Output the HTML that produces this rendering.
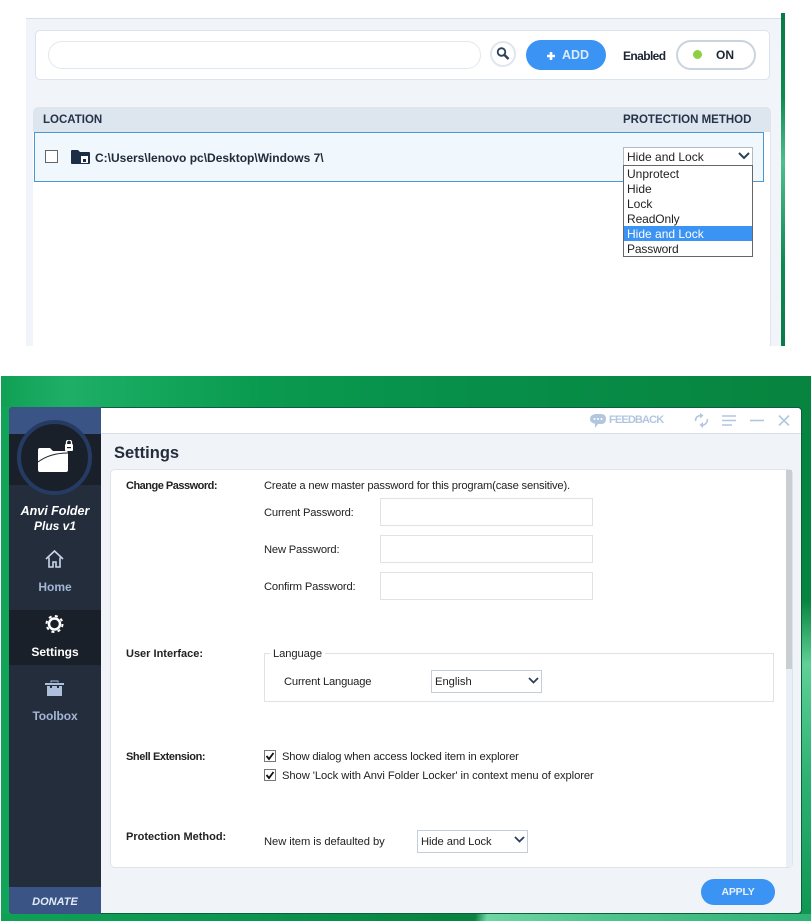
<!DOCTYPE html>
<html><head><meta charset="utf-8"><style>
html,body{margin:0;padding:0;width:811px;height:923px;overflow:hidden;background:#fff}
body{position:relative;font-family:"Liberation Sans",sans-serif;color:#222;font-size:11.5px}
.a,.t{position:absolute}
.t{white-space:nowrap;line-height:14px}
.b{font-weight:bold}
.i{box-sizing:border-box;position:absolute;left:380px;width:213px;height:28px;border:1px solid #dfe3e6;background:#fff}
.nav{color:#a3b6d6;font-weight:bold;font-size:12px;left:9px;width:92px;text-align:center}
</style></head><body>

<!-- TOP PANEL -->
<div class="a" style="left:26px;top:18px;width:755px;height:327px;background:#f1f5fa;border-top:1px solid #d5dfe8"></div>
<div class="a" style="left:781px;top:13px;width:4px;height:333px;background:linear-gradient(#0a7a46,#0e8a50 25%,#4fbd8e 45%,#0e8a50 75%,#0a7a46)"></div>
<div class="a" style="left:35px;top:30px;width:733px;height:48px;background:#fff;border:1px solid #dbe3ec;border-radius:5px"></div>
<div class="a" style="left:48px;top:41px;width:431px;height:26px;background:#fff;border:1px solid #e2e8ee;border-radius:14px"></div>
<div class="a" style="box-sizing:border-box;left:490px;top:41px;width:26px;height:26px;background:#fff;border:2px solid #e0e6ee;border-radius:50%"></div>
<svg class="a" style="left:496px;top:47px" width="15" height="15" viewBox="0 0 15 15"><circle cx="5.500" cy="5" r="3.800" fill="none" stroke="#2d4059" stroke-width="1.800"/><path d="M8.500 8l4 4" stroke="#2d4059" stroke-width="2.400"/></svg>
<div class="a" style="left:526px;top:40px;width:80px;height:30px;background:#3b93f3;border-radius:15px"></div>
<svg class="a" style="left:546px;top:51px" width="10" height="10"><path d="M5 1v8M1 5h8" stroke="#fff" stroke-width="2.600"/></svg>
<div class="t b" style="left:562px;top:48px;color:#dcebfd;font-size:12.500px">ADD</div>
<div class="t b" style="left:623px;top:49px;font-size:12px;letter-spacing:-.6px;color:#1c2533">Enabled</div>
<div class="a" style="box-sizing:border-box;left:676px;top:40px;width:80px;height:30px;background:#fff;border:2px solid #cbd4de;border-radius:15px"></div>
<div class="a" style="left:693px;top:50px;width:9px;height:9px;background:#8fd042;border-radius:50%"></div>
<div class="t b" style="left:716px;top:48px;font-size:12px;color:#1c2533">ON</div>

<div class="a" style="left:33px;top:107px;width:738px;height:25px;background:#dde6ef;border-radius:5px 5px 0 0"></div>
<div class="a" style="left:33px;top:132px;width:738px;height:214px;background:#fff"></div>
<div class="a" style="left:770px;top:132px;width:1px;height:214px;background:#dde6ef"></div>
<div class="t b" style="left:43px;top:113px;font-size:11.500px;color:#25324a">LOCATION</div>
<div class="t b" style="left:623px;top:113px;font-size:11.500px;color:#25324a">PROTECTION METHOD</div>
<div class="a" style="box-sizing:border-box;left:34px;top:132px;width:730px;height:50px;background:#f0f7fd;border:1px solid #4c97d2"></div>
<div class="a" style="box-sizing:border-box;left:45px;top:150px;width:13px;height:13px;background:#fff;border:1px solid #666"></div>
<svg class="a" style="left:71px;top:150px" width="19" height="14" viewBox="0 0 19 14"><path d="M0 1q0-1 1-1h6l2 2h9q1 0 1 1v10q0 1-1 1H1q-1 0-1-1z" fill="#1d2d45"/><rect x="10" y="6" width="7" height="7" fill="#fff"/><rect x="12" y="9" width="3" height="3" fill="#1d2d45"/></svg>
<div class="t b" style="left:95px;top:151px;font-size:12px;color:#222b3a">C:\Users\lenovo pc\Desktop\Windows 7\</div>

<div class="a" style="box-sizing:border-box;left:623px;top:147px;width:130px;height:19px;background:#fff;border:1px solid #b5b9bd"></div>
<div class="t" style="left:627px;top:150px;font-size:12px">Hide and Lock</div>
<svg class="a" style="left:738px;top:152px" width="12" height="8"><path d="M1 1l5 5 5-5" fill="none" stroke="#2d4059" stroke-width="2"/></svg>
<div class="a" style="box-sizing:border-box;left:623px;top:165px;width:130px;height:92px;background:#fff;border:1px solid #666"></div>
<div class="a" style="left:624px;top:226px;width:128px;height:15px;background:#3b93f3"></div>
<div class="t" style="left:627px;top:167px;font-size:12px">Unprotect</div>
<div class="t" style="left:627px;top:182px;font-size:12px">Hide</div>
<div class="t" style="left:627px;top:197px;font-size:12px">Lock</div>
<div class="t" style="left:627px;top:212px;font-size:12px;letter-spacing:-.1px">ReadOnly</div>
<div class="t" style="left:627px;top:227px;font-size:12px;color:#fff">Hide and Lock</div>
<div class="t" style="left:627px;top:242px;font-size:12px;letter-spacing:-.15px">Password</div>

<!-- BOTTOM WINDOW -->
<div class="a" style="left:1px;top:376px;width:810px;height:545px;background:linear-gradient(90deg,#0fa055 0%,#1fae66 8%,#14a85d 18%,#0a9a4f 32%,#07904a 55%,#07843f 100%)"></div>
<div class="a" style="left:1px;top:407px;width:8px;height:514px;background:#0fa458"></div>
<div class="a" style="left:801px;top:600px;width:10px;height:321px;background:linear-gradient(#07843f,#5fd096 20%,#2fb274 55%,#0c9550)"></div>
<div class="a" style="left:1px;top:914px;width:810px;height:7px;background:linear-gradient(100deg,#0fa055 0%,#0b9650 30%,#07843f 56%,#07843f 58.500%,#6fd6a4 60%,#4fc48c 75%,#2fb274 100%)"></div>
<div class="a" style="box-sizing:border-box;left:9px;top:407px;width:793px;height:507px;background:#f0f3f8;border:1px solid #0c5f3c;border-radius:4px;overflow:hidden"></div>
<div class="a" style="left:101px;top:408px;width:700px;height:25px;background:#fff;border-bottom:1px solid #d9dfe6;border-radius:0 4px 0 0"></div>

<!-- sidebar -->
<div class="a" style="left:9px;top:407px;width:92px;height:507px;background:#242d3c;border-radius:4px 0 0 4px"></div>
<div class="a" style="left:9px;top:407px;width:92px;height:27px;background:#3a5486;border-radius:4px 0 0 0"></div>
<div class="a" style="left:9px;top:434px;width:92px;height:51px;background:#1a202a"></div>
<div class="a" style="box-sizing:border-box;left:17px;top:420px;width:75px;height:75px;background:#1a202a;border:4px solid #263b63;border-radius:50%"></div>
<svg class="a" style="left:36px;top:440px" width="40" height="32" viewBox="0 0 40 32"><path d="M2 10q0-2 2-2h10l3 3h13q2 0 2 2v17q0 2-2 2H4q-2 0-2-2z" fill="#fff"/><path d="M2 22q12-9 30-9" fill="none" stroke="#1a202a" stroke-width="1"/><rect x="29" y="4" width="8" height="7" rx="1" fill="#fff"/><path d="M30.500 4V2.500a2.500 2.500 0 0 1 5 0V4" fill="none" stroke="#fff" stroke-width="1.300"/><rect x="31" y="7" width="4" height="1.200" fill="#1a202a"/></svg>
<div class="t b" style="left:9px;width:92px;top:504px;text-align:center;color:#fff;font-style:italic;font-size:12.500px">Anvi Folder</div>
<div class="t b" style="left:9px;width:92px;top:519px;text-align:center;color:#fff;font-style:italic;font-size:12px">Plus v1</div>
<svg class="a" style="left:44px;top:549px" width="21" height="20" viewBox="0 0 21 20" fill="none" stroke="#c9d6ea" stroke-width="1.600"><path d="M2 10l8.500-8 8.500 8M5 8.500V18h4v-5h3v5h4V8.500"/></svg>
<div class="t nav" style="top:580px">Home</div>
<div class="a" style="left:9px;top:610px;width:92px;height:55px;background:#1a202a"></div>
<svg class="a" style="left:44px;top:613px" width="21" height="22" viewBox="0 0 21 22"><circle cx="10.500" cy="11" r="5.500" fill="none" stroke="#fff" stroke-width="2.500"/><circle cx="10.500" cy="11" r="8" fill="none" stroke="#fff" stroke-width="2" stroke-dasharray="3 3.300"/></svg>
<div class="t nav" style="top:645px;color:#fff">Settings</div>
<svg class="a" style="left:45px;top:680px" width="19" height="16" viewBox="0 0 19 16"><path d="M6 2.500V1h7v1.500" fill="none" stroke="#aebfdc"/><rect x="0" y="3" width="19" height="2" fill="#aebfdc"/><rect x="2" y="6" width="15" height="10" fill="#aebfdc"/><rect x="5" y="5" width="2" height="3" fill="#242d3c"/><rect x="12" y="5" width="2" height="3" fill="#242d3c"/></svg>
<div class="t nav" style="top:709px;letter-spacing:-.1px">Toolbox</div>
<div class="a" style="left:9px;top:887px;width:92px;height:27px;background:#3a5486;border-radius:0 0 0 4px"></div>
<div class="t b" style="left:9px;width:92px;top:895px;text-align:center;color:#e4ebf6;font-style:italic;font-size:11px">DONATE</div>

<!-- title bar -->
<svg class="a" style="left:590px;top:413px" width="16" height="16" viewBox="0 0 16 16"><path d="M5 1h6q5 0 5 5t-5 5H8l-3 4v-4.300Q0 10 0 6t5-5z" fill="#b3c6e0"/><circle cx="4.500" cy="6" r="1" fill="#fff"/><circle cx="8" cy="6" r="1" fill="#fff"/><circle cx="11.500" cy="6" r="1" fill="#fff"/></svg>
<div class="t" style="left:609px;top:413px;color:#b3c6e0;font-size:11px;font-weight:bold;letter-spacing:-.85px">FEEDBACK</div>
<svg class="a" style="left:694px;top:413px" width="15" height="15" viewBox="0 0 15 15" fill="none" stroke="#b3c6e0" stroke-width="1.600"><path d="M1.500 8q0-5 5-5.500M13.500 6q0 5-5 6.500"/><path d="M6 0l3.500 2.500-3.500 3zM9 9l-3.500 3L9 15z" fill="#b3c6e0" stroke="none"/></svg>
<svg class="a" style="left:722px;top:415px" width="14" height="11"><path d="M0 1h14M0 5.500h14M0 10h10" stroke="#b3c6e0" stroke-width="1.600"/></svg>
<svg class="a" style="left:750px;top:415px" width="14" height="11"><path d="M0 5.500h14" stroke="#b3c6e0" stroke-width="1.600"/></svg>
<svg class="a" style="left:778px;top:415px" width="12" height="11"><path d="M1 .5l10 10M11 .5l-10 10" stroke="#b3c6e0" stroke-width="1.600"/></svg>

<div class="t b" style="left:114px;top:444px;font-size:16.500px;line-height:18px;color:#242d3c">Settings</div>

<!-- content card -->
<div class="a" style="box-sizing:border-box;left:110px;top:469px;width:683px;height:399px;background:#fff;border:1px solid #e0e4e9;border-radius:5px"></div>
<div class="a" style="left:786px;top:470px;width:6px;height:397px;background:#e9eff6"></div>
<div class="a" style="left:786px;top:470px;width:6px;height:199px;background:#c8ced2"></div>

<div class="t b" style="left:126px;top:479px;font-size:11px;letter-spacing:-.5px">Change Password:</div>
<div class="t" style="left:264px;top:479px;font-size:11.200px;letter-spacing:-.18px">Create a new master password for this program(case sensitive).</div>
<div class="t" style="left:264px;top:506px;font-size:11.200px;letter-spacing:-.18px">Current Password:</div>
<div class="i" style="top:498px"></div>
<div class="t" style="left:264px;top:543px;font-size:11.200px;letter-spacing:-.18px">New Password:</div>
<div class="i" style="top:535px"></div>
<div class="t" style="left:264px;top:580px;font-size:11.200px;letter-spacing:-.18px">Confirm Password:</div>
<div class="i" style="top:572px"></div>

<div class="t b" style="left:126px;top:647px;font-size:11px">User Interface:</div>
<div class="a" style="box-sizing:border-box;left:264px;top:653px;width:510px;height:49px;border:1px solid #dfe3e6"></div>
<div class="t" style="left:270px;top:647px;font-size:11.200px;background:#fff;padding:0 3px;letter-spacing:-.1px">Language</div>
<div class="t" style="left:284px;top:675px;font-size:11.200px;letter-spacing:-.18px">Current Language</div>
<div class="a" style="box-sizing:border-box;left:431px;top:670px;width:111px;height:23px;background:#fff;border:1px solid #c5ced8"></div>
<div class="t" style="left:435px;top:675px;font-size:11.200px">English</div>
<svg class="a" style="left:528px;top:677px" width="11" height="8"><path d="M1 1l4.500 4.500L10 1" fill="none" stroke="#2d4059" stroke-width="1.800"/></svg>

<div class="t b" style="left:126px;top:750px;font-size:11px;letter-spacing:-.4px">Shell Extension:</div>
<div class="a" style="box-sizing:border-box;left:264px;top:750px;width:12px;height:12px;border:1px solid #777;background:#fff"></div>
<svg class="a" style="left:265px;top:751px" width="10" height="10"><path d="M1.500 5l2.500 3 4.500-6" fill="none" stroke="#111" stroke-width="1.800"/></svg>
<div class="t" style="left:282px;top:750px;font-size:11.200px;letter-spacing:-.15px">Show dialog when access locked item in explorer</div>
<div class="a" style="box-sizing:border-box;left:264px;top:769px;width:12px;height:12px;border:1px solid #777;background:#fff"></div>
<svg class="a" style="left:265px;top:770px" width="10" height="10"><path d="M1.500 5l2.500 3 4.500-6" fill="none" stroke="#111" stroke-width="1.800"/></svg>
<div class="t" style="left:282px;top:769px;font-size:11.200px;letter-spacing:-.065px">Show 'Lock with Anvi Folder Locker' in context menu of explorer</div>

<div class="t b" style="left:126px;top:830px;font-size:11px">Protection Method:</div>
<div class="t" style="left:264px;top:835px;font-size:11.200px;letter-spacing:-.05px">New item is defaulted by</div>
<div class="a" style="box-sizing:border-box;left:417px;top:830px;width:111px;height:23px;background:#fff;border:1px solid #c5ced8"></div>
<div class="t" style="left:421px;top:835px;font-size:11.200px;letter-spacing:-.08px">Hide and Lock</div>
<svg class="a" style="left:514px;top:836px" width="11" height="8"><path d="M1 1l4.500 4.500L10 1" fill="none" stroke="#2d4059" stroke-width="1.800"/></svg>

<div class="a" style="left:701px;top:879px;width:74px;height:26px;background:#3b93f3;border-radius:13px"></div>
<div class="t b" style="left:701px;width:74px;top:885px;text-align:center;color:#e6f1fd;font-size:10.500px;letter-spacing:-.2px">APPLY</div>
</body></html>
